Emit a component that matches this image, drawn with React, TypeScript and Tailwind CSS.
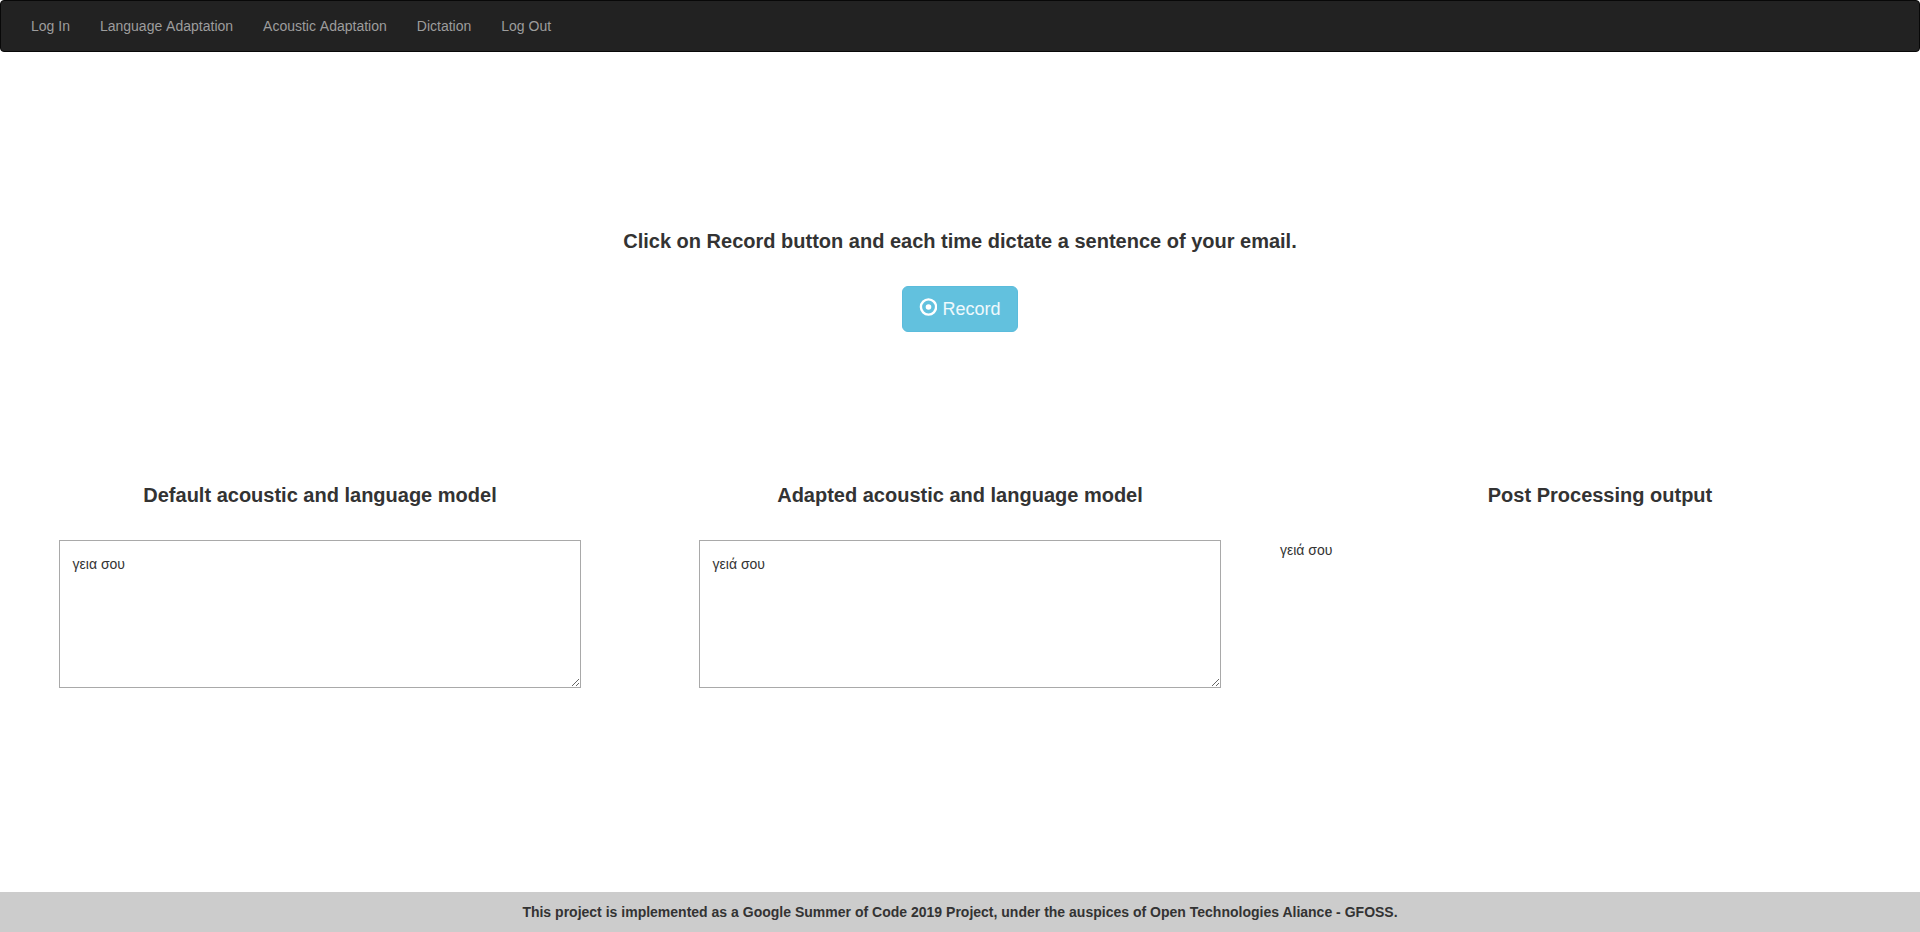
import React from "react";

const links = [
  { label: "Log In", spacing: "" },
  { label: "Language Adaptation", spacing: "[word-spacing:0.77px]" },
  { label: "Acoustic Adaptation", spacing: "[word-spacing:0.77px]" },
  { label: "Dictation", spacing: "" },
  { label: "Log Out", spacing: "" },
];

function Heading({ children }: { children: React.ReactNode }) {
  return <h3 className="text-center text-[20px] leading-[22px] font-bold">{children}</h3>;
}

function Output({ title, text }: { title: string; text: string }) {
  return (
    <section className="w-[640px] px-[59px]">
      <Heading>{title}</Heading>
      <textarea
        defaultValue={text}
        className="mt-[34px] block h-[148px] w-[522px] resize border border-[#a9a9a9] bg-white px-[12.6px] py-[13px] text-[14px] leading-[20px] outline-none"
      />
    </section>
  );
}

export default function App() {
  return (
    <div className="flex h-[932px] w-full flex-col overflow-hidden bg-white font-['Liberation_Sans',Arial,sans-serif] text-[14px] leading-[20px] text-[#333]">
      <nav className="flex h-[52px] shrink-0 items-center rounded-[4px] border border-[#080808] bg-[#222] pl-[15px]">
        {links.map(({ label, spacing }) => (
          <a key={label} href="#" className={`px-[15px] py-[15px] text-[#9d9d9d] ${spacing}`}>
            {label}
          </a>
        ))}
      </nav>
      <main className="flex flex-1 flex-col">
        <div className="mt-[178px] flex flex-col items-center">
          <Heading>Click on Record button and each time dictate a sentence of your email.</Heading>
          <button className="mt-[34px] flex h-[46px] items-center rounded-[6px] border border-[#5bbcdc] bg-[#62c1de] px-4 text-[18px] leading-[24px] text-white">
            <svg viewBox="0 0 18 18" className="mr-[5px] -mt-[4px] size-[18px]">
              <circle cx="9.5" cy="9" r="7.6" fill="none" stroke="currentColor" strokeWidth="2.4" />
              <circle cx="9.5" cy="9" r="2.8" fill="currentColor" />
            </svg>
            <span className="text-white/90">Record</span>
          </button>
        </div>
        <div className="mt-[152px] flex">
          <Output title="Default acoustic and language model" text="γεια σου" />
          <Output title="Adapted acoustic and language model" text="γειά σου" />
          <section className="w-[640px]">
            <Heading>Post Processing output</Heading>
            <p className="mt-[34px]">γειά σου</p>
          </section>
        </div>
      </main>
      <footer className="flex h-10 shrink-0 items-center justify-center bg-[#ccc] font-bold">
        <p className="[word-spacing:0.04px]">
          This project is implemented as a Google Summer of Code 2019 Project, under the auspices of Open Technologies Aliance - GFOSS.
        </p>
      </footer>
    </div>
  );
}
